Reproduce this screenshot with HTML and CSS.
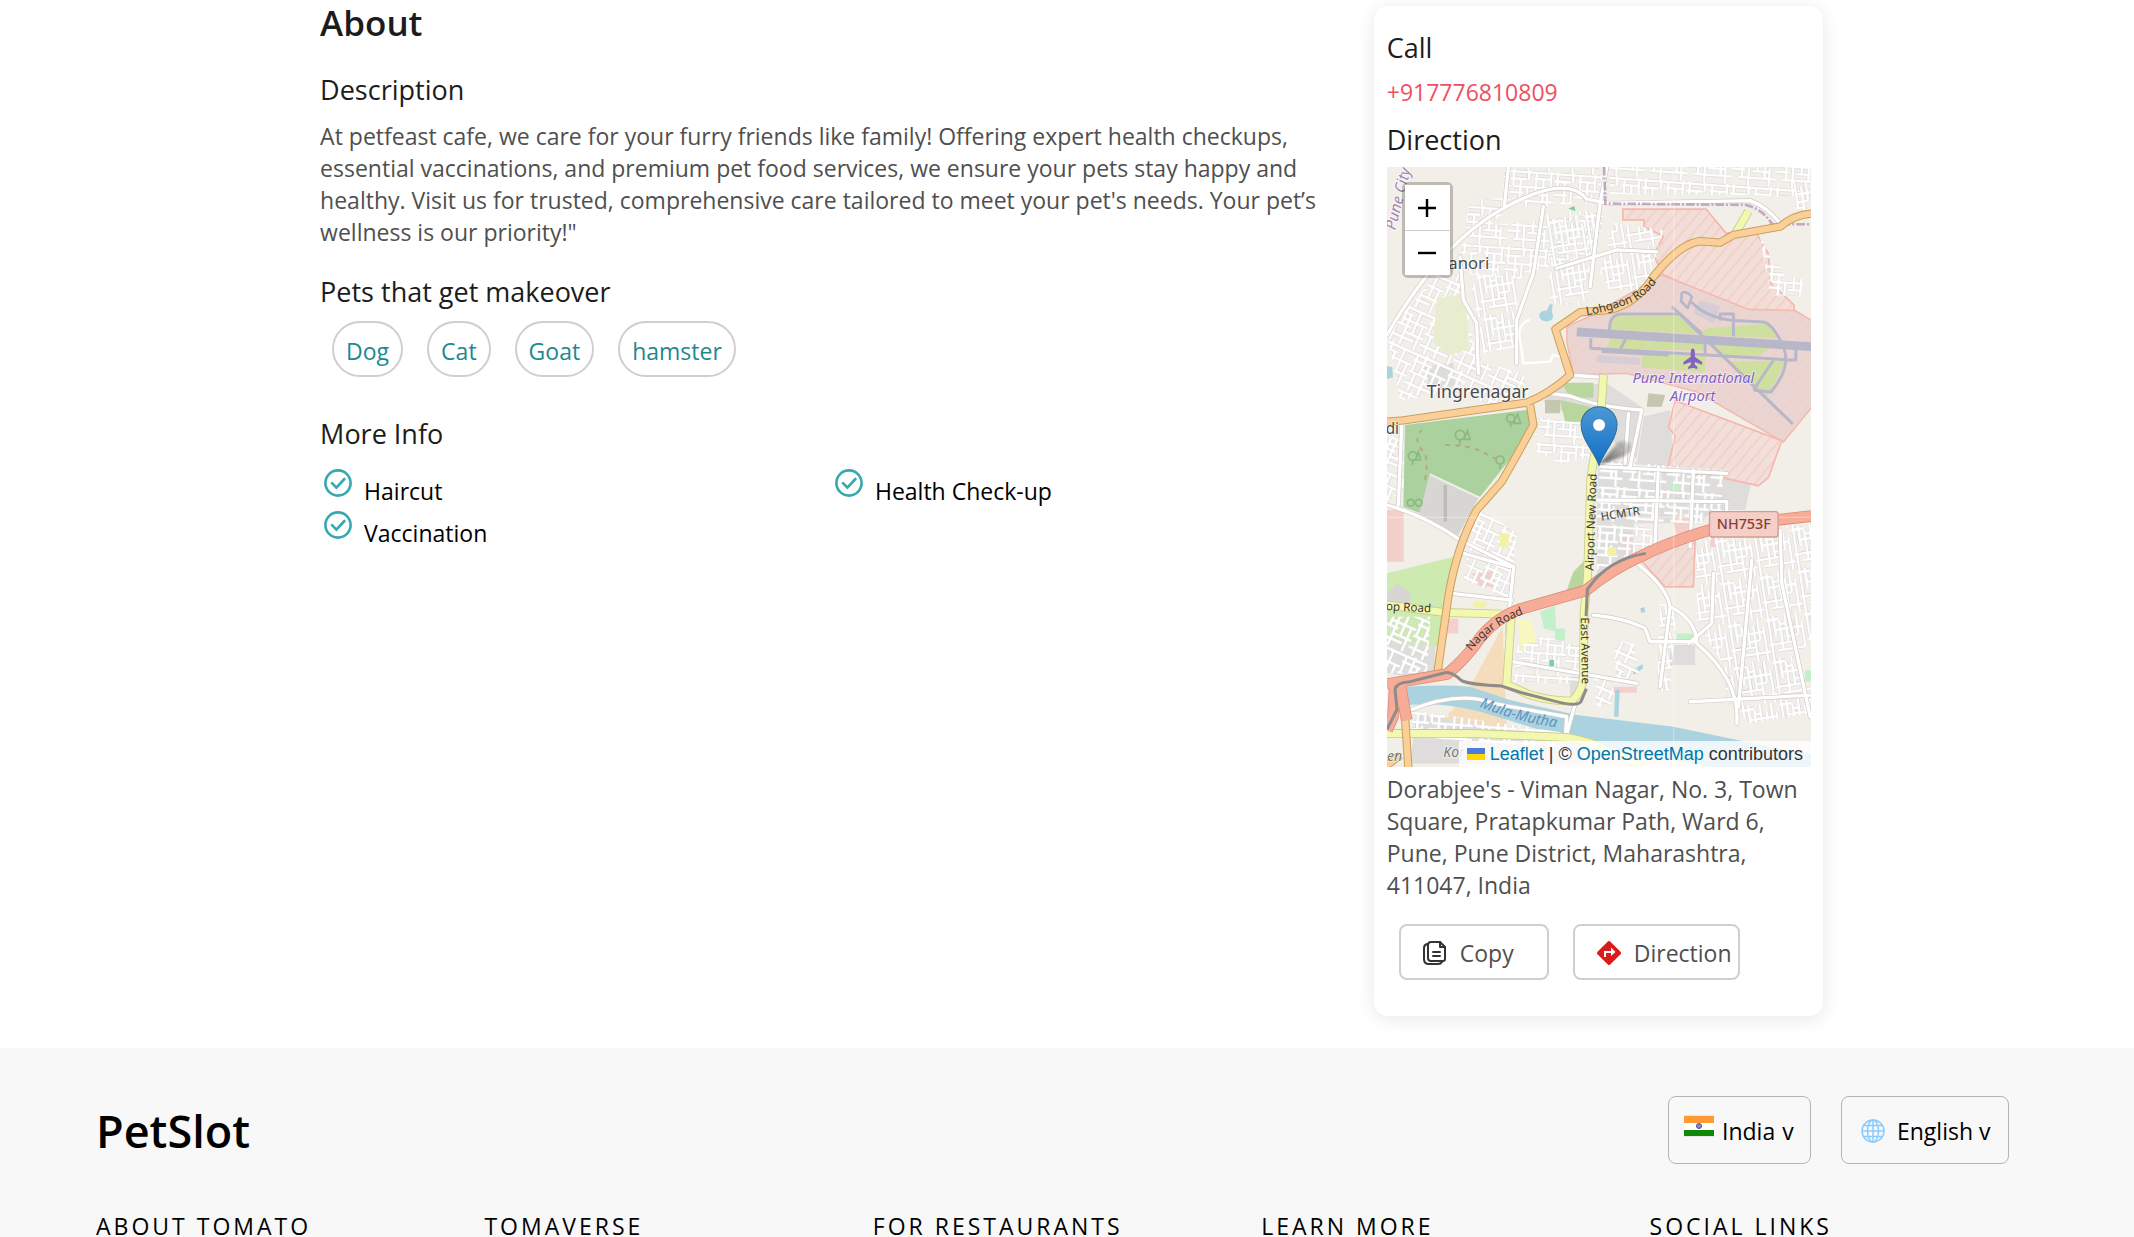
FILE: index.html
```html
<!DOCTYPE html>
<html lang="en">
<head>
<meta charset="utf-8">
<meta name="viewport" content="width=device-width, initial-scale=1">
<title>PetSlot</title>
<link rel="stylesheet" href="styles.css">
</head>
<body>
<main class="page">
  <section class="details">
    <h1 class="title">About</h1>
    <h2 class="subtitle">Description</h2>
    <p class="copy">At petfeast cafe, we care for your furry friends like family! Offering expert health checkups, essential vaccinations, and premium pet food services, we ensure your pets stay happy and healthy. Visit us for trusted, comprehensive care tailored to meet your pet's needs. Your pet’s wellness is our priority!"</p>
    <h2 class="subtitle">Pets that get makeover</h2>
    <ul class="chips">
      <li class="chip">Dog</li>
      <li class="chip">Cat</li>
      <li class="chip">Goat</li>
      <li class="chip">hamster</li>
    </ul>
    <h2 class="subtitle">More Info</h2>
    <ul class="features">
      <li class="feature"><svg class="check" viewBox="0 0 28 28"><circle cx="14" cy="14" r="12.600"/><path d="M8 14.200l4.400 4.400 8-8.600"/></svg><span>Haircut</span></li>
      <li class="feature"><svg class="check" viewBox="0 0 28 28"><circle cx="14" cy="14" r="12.600"/><path d="M8 14.200l4.400 4.400 8-8.600"/></svg><span>Health Check-up</span></li>
      <li class="feature"><svg class="check" viewBox="0 0 28 28"><circle cx="14" cy="14" r="12.600"/><path d="M8 14.200l4.400 4.400 8-8.600"/></svg><span>Vaccination</span></li>
    </ul>
  </section>

  <aside class="card">
    <h2 class="subtitle">Call</h2>
    <a class="phone" href="tel:+917776810809">+917776810809</a>
    <h2 class="subtitle">Direction</h2>
    <div class="map">
      <svg class="map-art" viewBox="21 21 1272 1800" preserveAspectRatio="xMidYMid slice" role="img" aria-label="Map of Viman Nagar, Pune">
        <defs>
          <pattern id="hatch" width="26" height="26" patternUnits="userSpaceOnUse" patternTransform="rotate(40)"><path d="M3 0V26" stroke="#f0cbc4" stroke-width="4"/></pattern>
          <pattern id="grid-a" width="132" height="116" patternUnits="userSpaceOnUse" patternTransform="rotate(4)"><g fill="none" stroke="#cfcdcb" stroke-width="11"><path d="M0 6H132M0 28H48M70 24H120M10 50H132M0 68H40M60 72H110M20 92H132M8 0V50M30 28V92M54 0V28M50 50V116M76 6V72M98 24V92M120 0V50M112 60V116"/></g><g fill="none" stroke="#fff" stroke-width="8"><path d="M0 6H132M0 28H48M70 24H120M10 50H132M0 68H40M60 72H110M20 92H132M8 0V50M30 28V92M54 0V28M50 50V116M76 6V72M98 24V92M120 0V50M112 60V116"/></g></pattern>
          <pattern id="grid-b" width="116" height="128" patternUnits="userSpaceOnUse" patternTransform="rotate(-9)"><g fill="none" stroke="#cfcdcb" stroke-width="11"><path d="M6 0V128M22 0V62M38 14V100M56 0V84M74 20V128M90 0V64M104 30V128M0 10H38M22 42H102M38 26H56M0 84H74M20 104H116M56 66H90"/></g><g fill="none" stroke="#fff" stroke-width="8"><path d="M6 0V128M22 0V62M38 14V100M56 0V84M74 20V128M90 0V64M104 30V128M0 10H38M22 42H102M38 26H56M0 84H74M20 104H116M56 66H90"/></g></pattern>
          <pattern id="grid-c" width="112" height="120" patternUnits="userSpaceOnUse" patternTransform="rotate(24)"><g fill="none" stroke="#cfcdcb" stroke-width="11"><path d="M0 8H112M0 26H60M34 44H112M0 62H62M50 80H112M0 98H90M8 8V64M34 0V62M52 26V120M76 8V80M98 44V120M20 62V120"/></g><g fill="none" stroke="#fff" stroke-width="8"><path d="M0 8H112M0 26H60M34 44H112M0 62H62M50 80H112M0 98H90M8 8V64M34 0V62M52 26V120M76 8V80M98 44V120M20 62V120"/></g></pattern>
          <linearGradient id="pin" x1="0" y1="0" x2="0" y2="1"><stop offset="0" stop-color="#4b98d4"/><stop offset="1" stop-color="#126fc6"/></linearGradient>
          <linearGradient id="shade" x1="0" y1="1" x2="1" y2="0"><stop offset="0" stop-opacity=".65"/><stop offset="1" stop-opacity=".08"/></linearGradient>
          <filter id="soft" x="-30%" y="-30%" width="160%" height="160%"><feGaussianBlur stdDeviation="5"/></filter>
          <path id="lohgaon" d="M620 466Q700 452 764 424Q808 400 846 344L870 310"/>
          <path id="nagar" d="M274 1474Q330 1400 430 1362L460 1350"/>
          <path id="mula" d="M298 1640Q420 1692 580 1708"/>
        </defs>
        <rect x="21" y="21" width="1272" height="1800" fill="#f2efe9"/>

        <!-- land use -->
        <g fill="#dedddb">
          <path d="M130 620l90-12 5 66-70 28z"/><path d="M520 680l160-10 110 75-20 150-160-110-120-60z"/><path d="M790 770l80-20 12 200-122 40z"/><path d="M655 900l290 20 110 10 60 30-20 90-90 0-45 40-310 0z"/><path d="M650 1090h110v130l-110 50z"/><path d="M21 1370l150 0-10 190-140-20z"/><path d="M110 1660l500 90v60H90z"/><path d="M150 945l145 70-60 110-115-60z"/><path d="M870 1455h75v60h-75zM570 1550h50l-10 60h-40z"/>
        </g>
        <path d="M75 795L440 750l20 60-160 200-150-70-30 120-50-20z" fill="#abd19e"/>
        <path d="M21 1240l200-50-50 270-150-22z" fill="#cdebb0"/>
        <path d="M150 950l145 65-62 110-115-66zM21 1300l30-30 40 28v40H21z" fill="#d8d6d2"/>
        <path d="M196 975v110" stroke="#bbb" stroke-width="10"/>
        <path d="M545 668h95v45h-70zM540 720l90 20v45h-75zM580 1235l40-40v110h-65z" fill="#b9d69d"/>
        <path d="M495 720h45v40h-45zM805 700l50 5-10 35h-45z" fill="#c4c8b0"/>
        <path d="M480 1355l45-18 3 78-36-10zM525 1405h30v36h-30zM890 1420h50v26h-50zM870 968l30-4v26h-28zM1275 1530h20v35h-20z" fill="#c2f0ca"/>
        <path d="M415 1380l35-5 20 70-50 30z" fill="#f7f8bd"/>
        <path d="M21 1050h50v155H21zM275 1240l65-8 5 50-50-5zM730 1118h28v60h-28zM875 1065l55 10v50h-40zM195 1375h40v45h-40zM700 1580h70v18h-70zM990 1130h25v32h-25z" fill="#f3d0cb"/>
        <path d="M368 1400l12 310-190-34 60-60z" fill="#f5dcba"/>

        <!-- airport -->
        <g stroke="#f5b7ae" stroke-width="4">
          <path d="M728 148h250l60 72 90-2 36 62 8 90 70 65v20h-140L850 345l-30-60 30-55-58-30v-20h-64z" fill="#f3ddd7"/>
          <path d="M728 148h250l60 72 90-2 36 62 8 90 70 65v20h-140L850 345l-30-60 30-55-58-30v-20h-64z" fill="url(#hatch)"/>
          <path d="M560 500l80-36 205-119 260 103 140 4 50 30v260l-85 104-260-150-210-56-160 4-20-100z" fill="#ead5d2"/>
          <path d="M560 500l80-36 205-119 260 103 140 4 50 30v260l-85 104-260-150-210-56-160 4-20-100z" fill="url(#hatch)" opacity=".5"/>
          <path d="M885 722l320 120-40 110-30 25-270-60 20-90-20-25z" fill="#f3dfd9"/>
          <path d="M885 722l320 120-40 110-30 25-270-60 20-90-20-25z" fill="url(#hatch)"/>
          <path d="M800 1180l145-40-5 140h-85l-75-82z" fill="#f0ddd6"/>
          <path d="M800 1180l145-40-5 140h-85l-75-82z" fill="url(#hatch)"/>
        </g>
        <path d="M700 470l200-2 60 55-272-15zM980 505l190-15 20 45-230-10zM690 535l280 12v25l-290-5zM785 575l190 5v55l-190-12zM985 550l195 8-60 40-80-5zM1050 605l170-5-60 110z" fill="#cfdf9f"/>
        <path d="M960 420l60 20-20 50-60-30zM650 585l130 10v20l-130-8z" fill="#d6cdd6"/>
        <g fill="none" stroke="#b8b7c9" stroke-linejoin="round">
          <path d="M590 516L1293 560" stroke-width="26"/>
          <path d="M688 510q0-50 40-48h170l340 330M632 535v30l600 35h15v-30M665 575l200 10M715 580l30-60M975 540v50M1060 530v-68h-40v20M932 425q50 50 130 57l90 4q30 10 60 80 20 60-40 130l-50-5M1180 600l-60 90M875 440l90 80" stroke-width="9"/>
          <path d="M905 400q10-10 30 10l-12 34-20-20z" stroke-width="8"/>
        </g>

        <!-- river and ponds -->
        <path d="M80 1580q110-8 190 0l120 40 200 45 290 35 290 60 123 22v39h-300l-413-76q-140-50-280-90-110-30-215-20z" fill="#aad3df"/>
        <path d="M478 462q10-14 22-9l10-22 8 4-3 20q10 20-5 27-20 8-32-9zM21 618l16 4 2 30-18 5zM705 1590h14l-4 80h-13zM758 1530l30-18v14l-28 18zM780 1345l12-4 4 14-12 4z" fill="#aad3df"/>

        <!-- residential street blocks -->
        <g fill="url(#grid-a)">
          <path d="M270 120l100-5 0-90h310v100l-300 20-140 150z"/><path d="M690 21h600v90l-160-4-440-5z"/><path d="M300 200l370-40-20 120-180 50-60 30-160-20z"/><path d="M460 770l140 20 30 100-90 20-70-35z"/><path d="M660 900l370 30-10 160-370-5z"/><path d="M410 1460l80-30 120 30-10 110-200-5z"/><path d="M1140 230l70 110 60 20-10 50-90-5z"/><path d="M650 1090l160 10 10 70-170 60z"/>
        </g>
        <g fill="url(#grid-b)">
          <path d="M700 190l150 20-30 100-30 80-100 0-30-50z"/><path d="M950 1110l343-20v350l-100 110-110 50-130-210-5-170z"/><path d="M1030 1460l150-10 110 120v90l-180 30-70-60z"/><path d="M840 1330l50 10-20 250-40 5z"/><path d="M270 350l140-20 0 230-100 20z"/><path d="M500 160l160-10-40 290-110-10z"/><path d="M1240 60l53 10v80l-43 0z"/>
        </g>
        <g fill="url(#grid-c)">
          <path d="M21 520l160-190 60 20 40 200 10 90-80 60-150 20z"/><path d="M280 600l150 40 20 100-120 5-80-60z"/><path d="M290 1040l120 80-20 200-140-60z"/><path d="M21 1370h130l-10 170-120 0z"/><path d="M700 1440l60 10 20 110-70 10z"/><path d="M21 830l50 0 0 180-50 10z"/><path d="M640 1540l60 10 0 80-50 10z"/>
        </g>
        <path d="M90 1650l480 70-10 50-460-40z" fill="url(#grid-a)"/>
        <path d="M170 415l70-10 18 22 10 140-60 20-48-40z" fill="#e9edd0"/>

        <!-- white streets -->
        <g fill="none" stroke-linejoin="round" stroke-linecap="round">
          <g stroke="#cfccc8" stroke-width="14">
            <path d="M21 525Q180 250 370 145T620 118Q670 128 690 130L1110 122Q1160 140 1200 190M385 21l-12 120M680 21l-20 110-30 250M530 325l180-55 120 6M240 290l10 130 40 70 5 150M490 140l-30 200-50 140 0 130"/>
            <path d="M510 700l60 8q80 32 215 42l-35 170M568 645l110 8M660 920l380 20M835 920l-10 230M940 930l-10 230M650 1020l390 5v50M21 1035q110 30 220 105l160 80-20 200M215 1300l180 20M250 1180l140 40M770 1210q90 70 100 130 80 40 80 110 130 110 120 240M640 1365q100 10 155 40l15 40h140M400 1505l370 65M870 1340l-30 240M1000 1240l-5 150-70 60M1200 1110l5 160 85 400M1115 1200l-40 440M90 1650q150-60 250-20l220 40-5 70M930 1625l363-20M65 795l-10 240M745 760l-10 150M560 1722l25-90"/>
          </g>
          <g stroke="#fff" stroke-width="10">
            <path d="M21 525Q180 250 370 145T620 118Q670 128 690 130L1110 122Q1160 140 1200 190M385 21l-12 120M680 21l-20 110-30 250M530 325l180-55 120 6M240 290l10 130 40 70 5 150M490 140l-30 200-50 140 0 130"/>
            <path d="M510 700l60 8q80 32 215 42l-35 170M568 645l110 8M660 920l380 20M835 920l-10 230M940 930l-10 230M650 1020l390 5v50M21 1035q110 30 220 105l160 80-20 200M215 1300l180 20M250 1180l140 40M770 1210q90 70 100 130 80 40 80 110 130 110 120 240M640 1365q100 10 155 40l15 40h140M400 1505l370 65M870 1340l-30 240M1000 1240l-5 150-70 60M1200 1110l5 160 85 400M1115 1200l-40 440M90 1650q150-60 250-20l220 40-5 70M930 1625l363-20M65 795l-10 240M745 760l-10 150M560 1722l25-90"/>
          </g>
        </g>
        <path d="M450 480q-40 10-30 60l10 70 80-5 10-20 40 10" fill="none" stroke="#fff" stroke-width="7"/>
        <path d="M672 21l4 110 420 4q50 10 80 58l117 0" fill="none" stroke="#b48fb5" stroke-width="8" stroke-dasharray="26 6 6 6" opacity=".75"/>

        <!-- yellow and orange roads -->
        <g fill="none" stroke-linejoin="round">
          <g stroke="#c9cc8c" stroke-width="26"><path d="M670 645l-8 120-30 190-10 300-10 100-2 190q-2 50-35 78-70 0-130-20l-65-30 14-210M21 1335l170 22 175 5M21 1720h260l280 12q70 10 130 45l100 44M1065 222l40-68"/></g>
          <g stroke="#f3f8b0" stroke-width="21"><path d="M670 645l-8 120-30 190-10 300-10 100-2 190q-2 50-35 78-70 0-130-20l-65-30 14-210M21 1335l170 22 175 5M21 1720h260l280 12q70 10 130 45l100 44M1065 222l40-68"/></g>
          <g stroke="#c9a05c" stroke-width="25"><path d="M21 785L70 781 440 728Q510 700 570 645L526 508 600 457 690 450Q770 430 820 350 900 250 960 244L1020 248 1060 225 1200 200Q1240 165 1293 161M450 735l10 60q-60 110-95 170L290 1050q-60 110-85 260l-33 230M75 1670l10 151M21 1815l40-30"/></g>
          <g stroke="#fbcf98" stroke-width="19"><path d="M21 785L70 781 440 728Q510 700 570 645L526 508 600 457 690 450Q770 430 820 350 900 250 960 244L1020 248 1060 225 1200 200Q1240 165 1293 161M450 735l10 60q-60 110-95 170L290 1050q-60 110-85 260l-33 230M75 1670l10 151M21 1815l40-30"/></g>
          <g stroke="#dc8c7a" stroke-width="35"><path d="M21 1572l180-30q60-50 100-110 50-60 120-85l195-55q80-65 170-105 100-50 250-90l257-29M45 1570l-6 100-18 40M60 1570l20 110"/></g>
          <g stroke="#f7ac98" stroke-width="30"><path d="M21 1572l180-30q60-50 100-110 50-60 120-85l195-55q80-65 170-105 100-50 250-90l257-29M45 1570l-6 100-18 40M60 1570l20 110"/></g>
          <path d="M21 1708l30-60-6-60q5-20 40-22l110-28q20-4 50 24 30 12 120 16l60 20 110 28q60 14 68-2l16-38M618 1368l4-80q60-90 175-108" stroke="#8f8b89" stroke-width="9"/>
        </g>

        <!-- trees and paths -->
        <g fill="none" stroke="#8cb882" stroke-width="5"><circle cx="392" cy="775" r="12"/><path d="M392 787v14M412 762l-12 28h22z"/><circle cx="240" cy="825" r="14"/><path d="M240 838v16M262 812l-10 26h18z"/><circle cx="98" cy="888" r="13"/><path d="M98 900v14M115 875l-9 25h16z"/><circle cx="360" cy="900" r="12"/><path d="M360 912v14"/><circle cx="92" cy="1028" r="10"/><circle cx="116" cy="1028" r="10"/></g>
        <path d="M135 960q10-50 0-80-40-40-10-70M195 855q60 0 100 15l60 30" fill="none" stroke="#b9a36a" stroke-width="5" stroke-dasharray="14 16"/>
        <path d="M360 1120h26v40h-26zM280 1325h38v18h-38zM684 1162h24v26h-24z" fill="#f2f2a2"/>
        <path d="M565 146l18-8 3 16zM508 1500h14v18h-14z" fill="#79cfaa"/>

        <!-- tile seams -->
        <path d="M21 1072H1293M881 21V1821" stroke="#fff" stroke-width="2" opacity=".6"/>

        <!-- labels -->
        <g class="place">
          <text x="205" y="326" font-size="50">anori</text>
          <text x="140" y="714" font-size="53">Tingrenagar</text>
          <text x="17" y="823" font-size="46">di</text>
        </g>
        <g class="road">
          <text font-size="35"><textPath href="#lohgaon">Lohgaon Road</textPath></text>
          <text font-size="35"><textPath href="#nagar">Nagar Road</textPath></text>
          <text font-size="35" transform="translate(640 1232) rotate(-88)">Airport New Road</text>
          <text font-size="35" transform="translate(602 1372) rotate(89)">East Avenue</text>
          <text font-size="34" transform="translate(664 1082) rotate(-9)">HCMTR</text>
          <text font-size="35" transform="translate(17 1350) rotate(3)">op Road</text>
        </g>
        <g class="water"><text font-size="44"><textPath href="#mula">Mula-Mutha</textPath></text></g>
        <text class="boundary" font-size="46" transform="translate(46 212) rotate(-76)">Pune City</text>
        <g class="airport" text-anchor="middle" font-size="44"><text x="940" y="668">Pune International</text><text x="938" y="722">Airport</text></g>
        <path d="M938 566q6 0 6 12v12l22 16v8l-22-8v8l8 7v6l-14-4-14 4v-6l8-7v-8l-22 8v-8l22-16v-12q0-12 6-12z" fill="#8461c4"/>
        <rect x="988" y="1055" width="206" height="76" rx="8" fill="#f3cfc8" stroke="#d89a8c" stroke-width="4"/>
        <text class="shield" x="1091" y="1107" font-size="43" text-anchor="middle">NH753F</text>
        <text class="hamlet" x="190" y="1792" font-size="42">Kor</text>
        <text class="hamlet" x="21" y="1802" font-size="42">en</text>

        <!-- marker -->
        <path d="M658 914l50-62q20-16 40-4 14 14-14 40z" fill="url(#shade)" filter="url(#soft)"/>
        <path d="M657 916C640 872 603 836 603 794a54 54 0 01108 0c0 42-37 78-54 122z" fill="url(#pin)" stroke="#2e6c97" stroke-width="3"/>
        <circle cx="657" cy="795" r="19" fill="#fff" stroke="#2e7ab5" stroke-width="2"/>
      </svg>
      <div class="zoom">
        <button class="zoom-btn" type="button" aria-label="Zoom in"><svg width="18" height="18" viewBox="0 0 18 18"><path d="M0 9h18M9 0v18"/></svg></button>
        <button class="zoom-btn" type="button" aria-label="Zoom out"><svg width="18" height="18" viewBox="0 0 18 18"><path d="M0 9h18"/></svg></button>
      </div>
      <div class="credit"><svg class="flag-ua" viewBox="0 0 18 12"><path fill="#4c7be1" d="M0 0h18v6H0z"/><path fill="#ffd500" d="M0 6h18v6H0z"/></svg> <a href="#leaflet">Leaflet</a> | © <a href="#osm">OpenStreetMap</a> contributors</div>
    </div>
    <p class="copy">Dorabjee's - Viman Nagar, No. 3, Town Square, Pratapkumar Path, Ward 6, Pune, Pune District, Maharashtra, 411047, India</p>
    <div class="actions">
      <button class="action" type="button">
        <svg width="24" height="26" viewBox="0 0 24 26" fill="none" stroke="#333" stroke-width="2" stroke-linejoin="round" stroke-linecap="round"><path d="M8 2h9l5 5v12q0 2-2 2H8q-3 0-3-3V5q0-3 3-3z"/><path d="M17 2v5h5M10 12h7M10 16h7"/><path d="M4 4Q1 5 1 8v11q0 5 5 5h9q3 0 4-2"/></svg>
        <span>Copy</span>
      </button>
      <button class="action" type="button">
        <svg width="24" height="24" viewBox="0 0 24 24"><path d="M10.800.5q1.200-1 2.400 0l10.300 10.300q1 1.200 0 2.400L13.200 23.500q-1.200 1-2.400 0L.5 13.200q-1-1.200 0-2.400z" fill="#db1a1a"/><path d="M8 16v-5h8" fill="none" stroke="#fff" stroke-width="2"/><path d="M14 6.500l4.500 4.500-4.500 4z" fill="#fff"/></svg>
        <span>Direction</span>
      </button>
    </div>
  </aside>
</main>

<footer class="footer">
  <div class="footer-top">
    <div class="brand">PetSlot</div>
    <div class="pickers">
      <button class="picker" type="button">
        <svg class="flag-in" width="30" height="22" viewBox="0 0 30 22"><path fill="#e6e6e6" d="M0 0h30v22H0z"/><path fill="#fff" d="M0 7h30v8H0z"/><path fill="#ff9933" d="M0 1h30v7H0z"/><path fill="#138808" d="M0 15h30v6H0z"/><circle cx="15" cy="11" r="2.500" fill="#8b8bc8" stroke="#4a4aa8"/></svg>
        <span>India</span><span class="caret">v</span>
      </button>
      <button class="picker picker-wide" type="button">
        <svg width="24" height="24" viewBox="0 0 24 24" fill="none" stroke="#88ccff" stroke-width="1.500"><circle cx="12" cy="12" r="11"/><ellipse cx="12" cy="12" rx="5.500" ry="11"/><path d="M12 1v22M1 12h22M3 6.500h18M3 17.500h18"/></svg>
        <span>English</span><span class="caret">v</span>
      </button>
    </div>
  </div>
  <div class="footer-cols">
    <h3 class="col-title">ABOUT TOMATO</h3>
    <h3 class="col-title">TOMAVERSE</h3>
    <h3 class="col-title">FOR RESTAURANTS</h3>
    <h3 class="col-title">LEARN MORE</h3>
    <h3 class="col-title">SOCIAL LINKS</h3>
  </div>
</footer>
</body>
</html>
```
FILE: styles.css
```css
* { box-sizing: border-box; }

body {
  margin: 0;
  background: #fff;
  color: #000;
  font-family: "Open Sans", "Noto Sans", sans-serif;
  font-size: 23px;
  line-height: 32px;
}

h1, h2, h3, p, ul { margin: 0; padding: 0; font-weight: 400; }
ul { list-style: none; }
a { text-decoration: none; }
button { font: inherit; background: none; cursor: pointer; }

.page {
  display: grid;
  grid-template-columns: minmax(0, 7fr) minmax(0, 3fr);
  margin: 0 15%;
  padding: 6px 0 32px;
}

.details { padding-right: 24px; }

.title {
  color: #1c1c1c;
  font-size: 35px;
  font-weight: 600;
  line-height: 34px;
}

.subtitle {
  color: #1c1c1c;
  font-size: 27px;
  line-height: 36px;
}

.title + .subtitle { margin-top: 32px; }

.copy { color: #4f4f4f; }
.details .copy { margin: 12px 0 26px; }

.chips {
  display: flex;
  gap: 24px;
  margin: 11px 12px 39px;
}

.chip {
  padding: 12px 12px 8px;
  height: 56px;
  border: 2px solid #cfcfcf;
  border-radius: 28px;
  color: #1c8991;
}

.features {
  display: grid;
  grid-template-columns: 1fr 1fr;
  margin-top: 17px;
}

.feature {
  display: flex;
  gap: 12px;
  height: 42px;
  padding-left: 4px;
}

.feature span { padding-top: 6px; }

.check {
  width: 28px;
  height: 28px;
  fill: none;
  stroke: #36a8b0;
  stroke-width: 2.600;
  stroke-linecap: round;
}

.card {
  margin: 0 -9px 0 8px;
  padding: 24px 12px 36px 13px;
  border-radius: 14px;
  background: #fff;
  box-shadow: 0 3px 18px rgba(28, 28, 28, .1);
}

.phone {
  display: block;
  margin: 10px 0 14px;
  color: #ef4f5f;
}

.map {
  position: relative;
  height: 600px;
  margin: 9px 0 6px;
  overflow: hidden;
}

.map-art {
  display: block;
  width: 100%;
  height: 100%;
  font-family: "Noto Sans", sans-serif;
}

.map-art text { paint-order: stroke; stroke: #fff; stroke-opacity: .6; stroke-width: 5px; }
.map-art .place { fill: #4a4a4a; }
.map-art .road { fill: #3f3a30; }
.map-art .road text { stroke-width: 0; }
.map-art .water { fill: #5f93c0; font-style: italic; }
.map-art .water text { stroke-width: 0; }
.map-art .boundary { fill: #a585ae; font-style: italic; }
.map-art .airport { fill: #8461c4; font-style: italic; }
.map-art .shield { fill: #8a3f31; font-weight: 500; stroke-width: 0; }
.map-art .hamlet { fill: #777; font-style: italic; }

.zoom {
  position: absolute;
  top: 15px;
  left: 15px;
  border: 3px solid rgba(0, 0, 0, .22);
  border-radius: 6px;
  background-clip: padding-box;
}

.zoom-btn {
  display: grid;
  place-items: center;
  width: 45px;
  height: 45px;
  padding: 0;
  border: 0;
  background: #fff;
}

.zoom-btn + .zoom-btn { border-top: 1px solid #ccc; }
.zoom-btn path { stroke: #000; stroke-width: 2.400; }

.credit {
  position: absolute;
  right: 0;
  bottom: 0;
  padding: 0 8px;
  background: rgba(255, 255, 255, .8);
  color: #333;
  font: 18px/26px "Liberation Sans", Arial, sans-serif;
  white-space: nowrap;
}

.credit a { color: #0078a8; }
.flag-ua { width: 18px; height: 12px; }

.actions {
  display: flex;
  gap: 24px;
  margin: 23px 12px 0;
}

.action {
  display: flex;
  align-items: center;
  gap: 13px;
  width: 150px;
  height: 56px;
  padding: 2px 0 0 22px;
  border: 2px solid #cfcfcf;
  border-radius: 8px;
  color: #4f4f4f;
}

.action + .action { width: 167px; }
.action svg { flex: none; }

.footer {
  padding: 48px 4.5% 0;
  background: #f8f8f8;
}

.footer-top {
  display: flex;
  justify-content: space-between;
  height: 68px;
  padding-right: 29px;
}

.brand {
  font-size: 45px;
  font-weight: 600;
  line-height: 70px;
}

.pickers { display: flex; gap: 30px; }

.picker {
  display: flex;
  align-items: center;
  gap: 8px;
  width: 143px;
  padding: 2px 0 0 15px;
  border: 1px solid #b5b5b5;
  border-radius: 8px;
  color: #000;
}

.picker-wide { gap: 12px; width: 168px; padding-left: 19px; }
.caret { margin-left: -1px; }
.picker-wide .caret { margin-left: -6px; }
.flag-in { margin-bottom: 10px; }

.footer-cols {
  display: grid;
  grid-template-columns: repeat(5, minmax(0, 1fr));
  padding-top: 50px;
}

.col-title {
  font-size: 23px;
  line-height: 24px;
  letter-spacing: 3px;
}
```
